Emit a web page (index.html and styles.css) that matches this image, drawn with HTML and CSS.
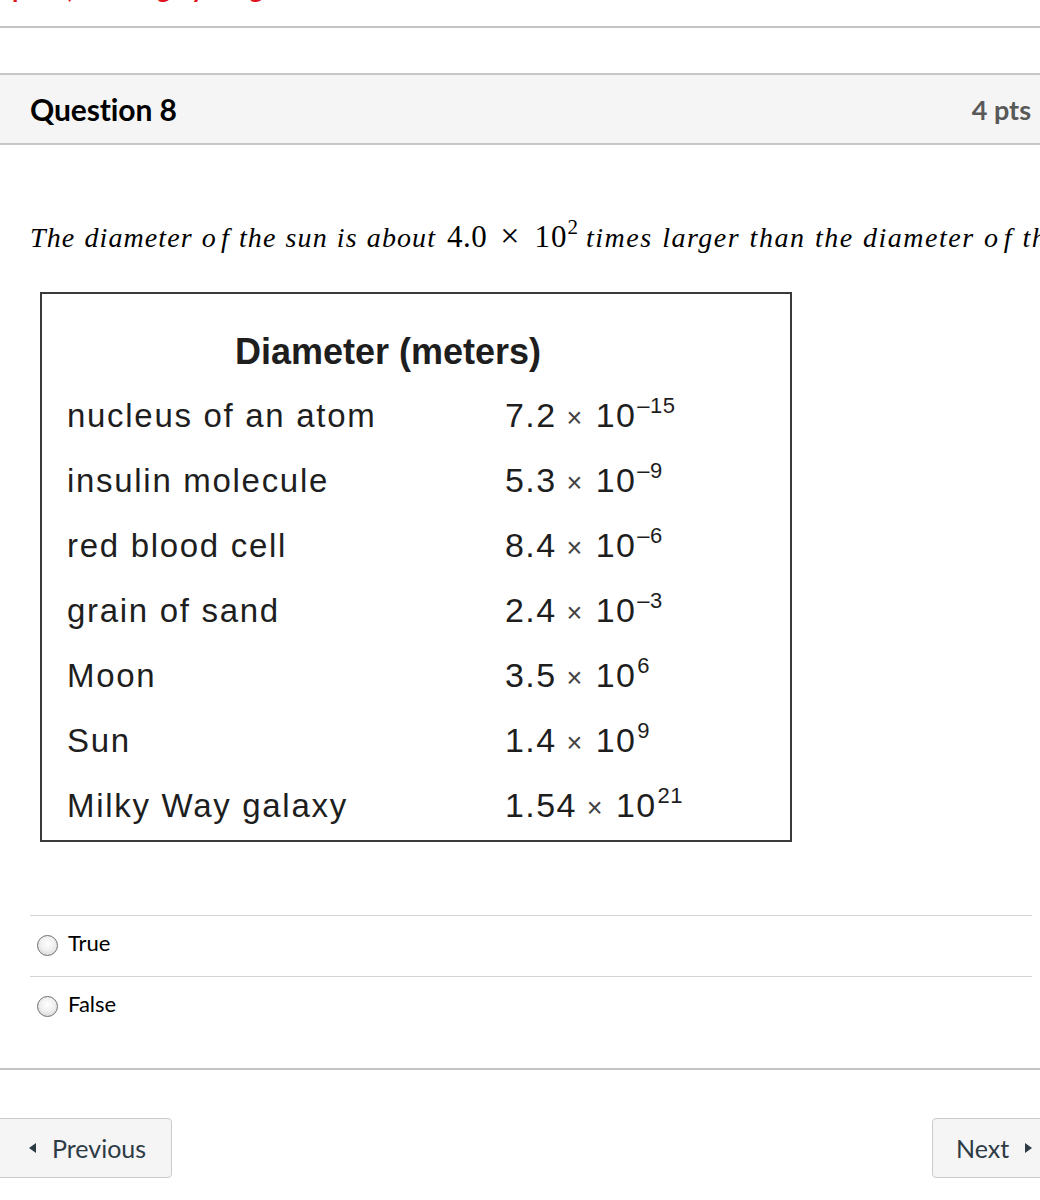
FILE: index.html
```html
<!DOCTYPE html>
<html lang="en">
<head>
<meta charset="utf-8">
<title>Question 8</title>
<link rel="stylesheet" href="styles.css">
</head>
<body>
<div class="page">
  <div class="notice"><p class="notice-text">print, then sign your grade</p></div>

  <section class="question">
    <header class="q-header">
      <h2 class="q-title">Question 8</h2>
      <span class="q-points">4 pts</span>
    </header>

    <div class="q-body">
      <p class="q-text"><span class="mi">The diameter o<span class="f">f</span> the sun is about</span> <span class="mn">4.0</span><span class="mo">×</span><span class="mn mn-exp">10<sup>2</sup></span> <span class="mi mi-wide">times larger than the diameter o<span class="f">f</span> the moon.</span></p>

      <div class="data-table">
        <div class="dt-head">Diameter (meters)</div>
        <div class="dt-name">nucleus of an atom</div><div class="dt-val">7.2<span class="x">×</span>10<sup>–15</sup></div>
        <div class="dt-name">insulin molecule</div><div class="dt-val">5.3<span class="x">×</span>10<sup>–9</sup></div>
        <div class="dt-name">red blood cell</div><div class="dt-val">8.4<span class="x">×</span>10<sup>–6</sup></div>
        <div class="dt-name">grain of sand</div><div class="dt-val">2.4<span class="x">×</span>10<sup>–3</sup></div>
        <div class="dt-name">Moon</div><div class="dt-val">3.5<span class="x">×</span>10<sup>6</sup></div>
        <div class="dt-name">Sun</div><div class="dt-val">1.4<span class="x">×</span>10<sup>9</sup></div>
        <div class="dt-name">Milky Way galaxy</div><div class="dt-val">1.54<span class="x">×</span>10<sup>21</sup></div>
      </div>

      <div class="answers">
        <label class="answer"><span class="radio"></span><span class="answer-text">True</span></label>
        <label class="answer"><span class="radio"></span><span class="answer-text">False</span></label>
      </div>
    </div>
  </section>

  <nav class="pager">
    <button class="btn btn-prev"><span class="tri tri-left"></span>Previous</button>
    <button class="btn btn-next">Next<span class="tri tri-right"></span></button>
  </nav>
</div>
</body>
</html>
```

FILE: styles.css
```css
html, body {
  margin: 0;
  padding: 0;
  background: #ffffff;
}

body {
  width: 1040px;
  height: 1200px;
  overflow: hidden;
  font-family: Lato, "Noto Sans", "Liberation Sans", sans-serif;
  color: #2d3b45;
}

.page {
  width: 1040px;
  overflow: hidden;
}

/* red notice, mostly scrolled above the viewport */
.notice {
  height: 26px;
  border-bottom: 2px solid #c4c4c4;
  overflow: hidden;
}

.notice-text {
  margin: -27px 0 0 12px;
  font-size: 26px;
  line-height: 30px;
  font-weight: 700;
  color: #e0141e;
  white-space: nowrap;
}

.question {
  margin-top: 45px;
}

.q-header {
  display: flex;
  align-items: center;
  justify-content: space-between;
  height: 68px;
  padding: 0 9px 0 30px;
  background: #f5f5f5;
  border-top: 2px solid #c7c7c7;
  border-bottom: 2px solid #c7c7c7;
}

.q-title {
  margin: 0;
  font-size: 30px;
  font-weight: 700;
  color: #000000;
  letter-spacing: -0.1px;
}

.q-points {
  font-size: 27px;
  font-weight: 700;
  color: #595959;
}

.q-body {
  padding: 0 8px 0 30px;
}

.q-text {
  margin: 76px 0 0 0;
  font-family: "Liberation Serif", "Times New Roman", serif;
  font-size: 28px;
  line-height: 34px;
  height: 34px;
  color: #000000;
  white-space: nowrap;
}

.q-text .mi {
  font-style: italic;
  letter-spacing: 1.1px;
  word-spacing: 1px;
}

.q-text .mi-wide {
  letter-spacing: 1.5px;
}

.q-text .mn {
  font-size: 31px;
  line-height: 20px;
  letter-spacing: 0.5px;
  margin-left: 4px;
}

.q-text .mn-exp {
  margin-left: 0;
  letter-spacing: 1px;
}

.q-text .f {
  margin-left: 4px;
}

.q-text .mo {
  font-size: 34px;
  line-height: 20px;
  margin: 0 15px 0 13px;
}

.q-text sup {
  font-size: 21px;
  line-height: 0;
  vertical-align: 13px;
}

.data-table {
  display: grid;
  grid-template-columns: 463px 1fr;
  grid-auto-rows: 65px;
  align-items: center;
  width: 748px;
  margin: 37px 0 0 10px;
  padding: 24px 0 0 0;
  height: 522px;
  border: 2px solid #3a3a3a;
  box-sizing: content-box;
  font-family: "Liberation Sans", Arial, sans-serif;
  color: #1e1e1e;
}

.dt-head {
  grid-column: 1 / 3;
  height: 65px;
  line-height: 65px;
  margin-top: 2px;
  text-align: center;
  padding-right: 56px;
  font-size: 36px;
  font-weight: 700;
}

.dt-name,
.dt-val {
  font-size: 33px;
  letter-spacing: 1.7px;
  white-space: nowrap;
}

.dt-name {
  padding-left: 25px;
}

.dt-val {
  font-size: 34px;
  letter-spacing: 1.4px;
}

.dt-val sup {
  font-size: 22px;
  line-height: 0;
  vertical-align: 14px;
  letter-spacing: 0.5px;
  margin-left: 1px;
}

.dt-val .x {
  font-size: 27px;
  color: #444444;
  margin: 0 12px 0 10px;
}

.answers {
  margin-top: 73px;
  border-top: 1px solid #d3d3d3;
}

.answer {
  display: flex;
  align-items: center;
  height: 61px;
  border-bottom: 1px solid #d3d3d3;
  padding-left: 7px;
  padding-bottom: 2px;
  box-sizing: border-box;
}

.answer:last-child {
  border-bottom: none;
}

.radio {
  width: 19px;
  height: 19px;
  border: 1.5px solid #6f6f6f;
  border-radius: 50%;
  background: radial-gradient(circle at 50% 40%, #ffffff 0%, #f0f0f0 45%, #cfcfcf 100%);
  margin-right: 10px;
  flex: none;
}

.answer-text {
  font-size: 22px;
  line-height: 1;
  margin-bottom: 5px;
  color: #000000;
}

.pager {
  display: flex;
  justify-content: space-between;
  align-items: flex-start;
  margin-top: 30px;
  border-top: 2px solid #c4c4c4;
  padding-top: 48px;
}

.btn {
  display: flex;
  align-items: center;
  height: 60px;
  box-sizing: border-box;
  background: #f5f5f5;
  border: 1px solid #c7cdd1;
  border-radius: 4px;
  font-family: Lato, "Noto Sans", sans-serif;
  font-size: 25px;
  color: #2d3b45;
  padding: 0;
}

.btn-prev {
  margin-left: -8px;
  width: 180px;
  padding-left: 36px;
}

.btn-next {
  width: 130px;
  margin-right: -22px;
  padding-left: 23px;
}

.tri {
  display: inline-block;
  width: 0;
  height: 0;
  border-top: 5px solid transparent;
  border-bottom: 5px solid transparent;
}

.tri-left {
  border-right: 7px solid #2d3b45;
  margin-right: 16px;
}

.tri-right {
  border-left: 7px solid #2d3b45;
  margin-left: 16px;
}
```
